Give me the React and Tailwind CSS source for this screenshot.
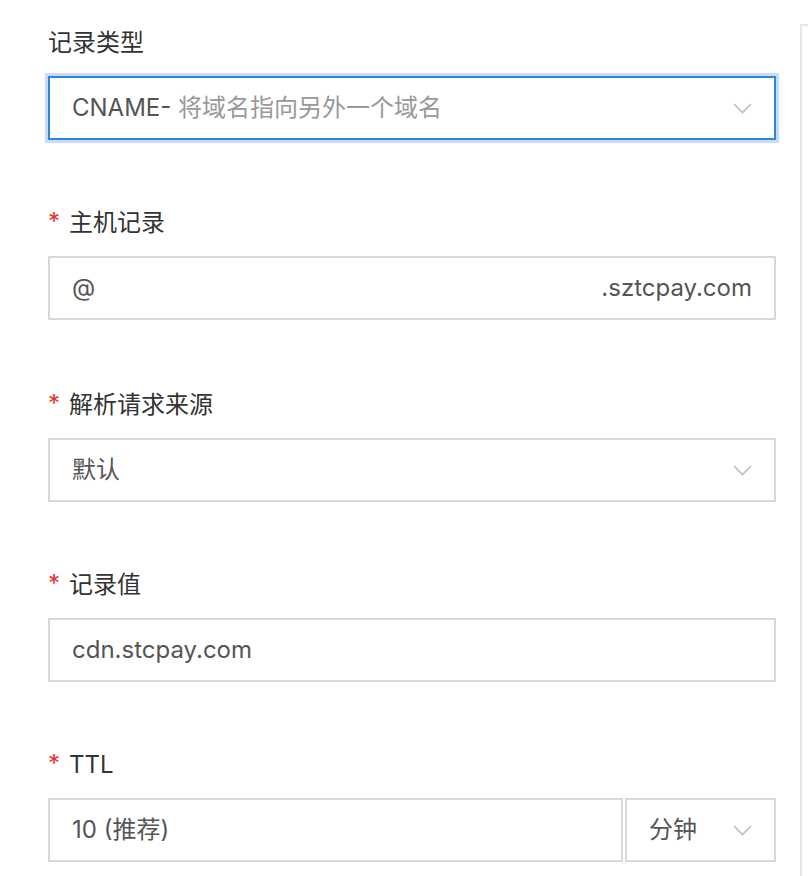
const font = { fontFamily: '"Inter", "Noto Sans CJK SC", sans-serif' };

const Chevron = () => (
  <svg width="19" height="11" viewBox="0 0 19 11" fill="none" className="shrink-0">
    <path d="M1 1L9.5 9.5L18 1" stroke="#bdbdbd" strokeWidth="1.6" />
  </svg>
);

const Label = ({ required, children }) => (
  <div className="flex h-8 items-center text-[24px] text-[#333]">
    {required && (
      <span className="w-[21px] self-start pt-[3px] text-[24px] leading-none text-[#e5322d]">*</span>
    )}
    <span className="leading-8">{children}</span>
  </div>
);

const Box = ({ className = "", children }) => (
  <div
    className={`flex h-16 items-center border-2 border-[#d9d9d9] bg-white px-[22px] text-[24px] text-[#555] ${className}`}
  >
    {children}
  </div>
);

export default function App() {
  return (
    <div className="flex h-[876px] overflow-hidden bg-white" style={font}>
      <div className="w-[800px] shrink-0 pl-12 pr-6 pt-[27px]">
        <div className="w-[728px]">
          {/* 记录类型 */}
          <Label>记录类型</Label>
          <div className="mt-[17px] flex h-16 items-center justify-between border-2 border-[#2f86d6] px-[22px] text-[24px] ring-[3px] ring-[#c8ddf3]">
            <span>
              <span className="text-[#555]">CNAME-</span>
              <span className="text-[#999]"> 将域名指向另外一个域名</span>
            </span>
            <Chevron />
          </div>

          {/* 主机记录 */}
          <div className="mt-[67px]">
            <Label required>主机记录</Label>
            <Box className="mt-[17px] justify-between">
              <span>@</span>
              <span>.sztcpay.com</span>
            </Box>
          </div>

          {/* 解析请求来源 */}
          <div className="mt-[69px]">
            <Label required>解析请求来源</Label>
            <Box className="mt-[17px] justify-between">
              <span>默认</span>
              <Chevron />
            </Box>
          </div>

          {/* 记录值 */}
          <div className="mt-[67px]">
            <Label required>记录值</Label>
            <Box className="mt-[17px]">
              <span>cdn.stcpay.com</span>
            </Box>
          </div>

          {/* TTL */}
          <div className="mt-[67px]">
            <Label required>TTL</Label>
            <div className="mt-[17px] flex gap-[2px]">
              <Box className="flex-1">
                <span>10 (推荐)</span>
              </Box>
              <Box className="w-[151px] justify-between">
                <span>分钟</span>
                <Chevron />
              </Box>
            </div>
          </div>
        </div>
      </div>
      <div className="mt-6 flex-1 border-l-2 border-t-2 border-[#e6e6e6]" />
    </div>
  );
}
